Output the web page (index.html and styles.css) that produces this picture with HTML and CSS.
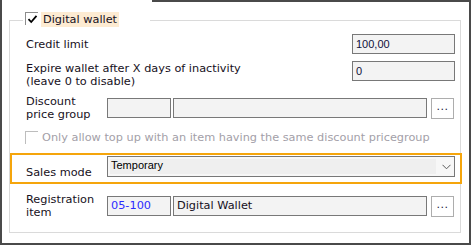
FILE: index.html
```html
<!DOCTYPE html>
<html>
<head>
<meta charset="utf-8">
<link rel="stylesheet" href="styles.css">
</head>
<body>
<div class="window">
  <div class="group">
    <div class="legend">
      <span class="cb cb-on"><svg width="11" height="11" viewBox="0 0 11 11"><path d="M1.5 5.2 L4.2 8 L9.5 1.8" fill="none" stroke="#000" stroke-width="1.8"/></svg></span>
      <span class="legend-label">Digital wallet</span>
    </div>

    <div class="row row-credit">
      <span class="label">Credit limit</span>
      <span class="field field-num">100,00</span>
    </div>

    <div class="row row-expire">
      <span class="label">Expire wallet after X days of inactivity<br>(leave 0 to disable)</span>
      <span class="field field-num">0</span>
    </div>

    <div class="row row-lookup row-discount">
      <span class="label label-col">Discount<br>price group</span>
      <span class="field field-code"></span>
      <span class="field field-name"></span>
      <span class="btn">...</span>
    </div>

    <div class="row row-check">
      <span class="cb cb-off"></span>
      <span class="disabled-text">Only allow top up with an item having the same discount pricegroup</span>
    </div>

    <div class="highlight">
      <span class="label label-col label-sales">Sales mode</span>
      <div class="select">
        <div class="select-value">Temporary</div>
        <svg class="chevron" width="9" height="6" viewBox="0 0 9 6"><path d="M0.5 0.8 L4.5 4.8 L8.5 0.8" fill="none" stroke="#5a5a5a" stroke-width="1"/></svg>
      </div>
    </div>

    <div class="row row-lookup row-reg">
      <span class="label label-col">Registration<br>item</span>
      <span class="field field-code code-blue">05-100</span>
      <span class="field field-name">Digital Wallet</span>
      <span class="btn">...</span>
    </div>
  </div>
</div>
</body>
</html>
```
FILE: styles.css
```css
* { box-sizing: border-box; }

html, body {
  margin: 0;
  padding: 0;
  background: #ffffff;
}

body {
  font-family: "DejaVu Sans", Verdana, sans-serif;
  font-size: 11.3px;
  line-height: 13px;
  color: #161022;
}

.window {
  position: relative;
  width: 471px;
  height: 245px;
  border-left: 2px solid #4a4a4a;
  border-right: 2px solid #4a4a4a;
  border-bottom: 2px solid #4a4a4a;
  background: #fff;
  overflow: hidden;
}

.window::before {
  content: "";
  position: absolute;
  left: 150px;
  right: 0;
  top: 0;
  height: 2px;
  background: #4a4a4a;
}

.group {
  position: relative;
  margin: 20px 0 0 7px;
  width: 452px;
  height: 213px;
  border: 1px solid #dadada;
  padding: 13px 5px 0 16px;
}

.legend {
  position: absolute;
  left: 13px;
  top: -11px;
  width: 127px;
  height: 18px;
  background: #fff;
  display: flex;
  align-items: flex-start;
  padding: 2px 0 0 2px;
}

.cb {
  display: flex;
  align-items: center;
  justify-content: center;
  width: 13px;
  height: 13px;
  flex: none;
}

.cb-on {
  border-left: 1px solid #8c8c8c;
  border-top: 1px solid #8c8c8c;
  padding: 1px 0 0 1px;
}

.cb-off {
  border-left: 1px solid #bdbdbd;
  border-top: 1px solid #bdbdbd;
  margin: 2px 0 0 -1px;
}

.legend-label {
  margin-left: 3px;
  height: 15px;
  line-height: 15px;
  padding: 0 2px 0 2px;
  background: #fdebd2;
  color: #161022;
  white-space: nowrap;
}

.row {
  display: flex;
}

.label {
  white-space: nowrap;
}

.row-credit {
  height: 20px;
  align-items: center;
}

.row-expire {
  margin-top: 7px;
  align-items: flex-start;
}

.row-expire .label {
  padding-top: 1px;
}

.row-credit .field-num,
.row-expire .field-num {
  margin-left: auto;
}

.field {
  display: block;
  height: 20px;
  border: 1px solid #787878;
  background: #f3f3f3;
  color: #10103a;
  line-height: 18px;
  padding-left: 3px;
  white-space: nowrap;
  overflow: hidden;
  flex: none;
}

.field-num {
  width: 103px;
  font-family: "Liberation Sans", Arial, sans-serif;
  font-size: 11px;
}

.row-lookup {
  height: 26px;
  align-items: center;
}

.row-discount {
  margin-top: 7px;
}

.label-col {
  width: 81px;
  flex: none;
}

.field-code {
  width: 64px;
}

.field-name {
  width: 254px;
  margin-left: 2px;
  color: #161022;
}

.code-blue {
  color: #2b2bff;
}

.btn {
  width: 23px;
  height: 21px;
  margin-left: 4px;
  border: 1px solid #adadad;
  background: #fff;
  flex: none;
  text-align: center;
  line-height: 15px;
  font-size: 11px;
  color: #1a1a40;
  letter-spacing: 0.5px;
}

.row-check {
  margin-top: 8px;
  height: 15px;
  align-items: flex-start;
}

.disabled-text {
  margin-left: 4px;
  padding-top: 2px;
  color: #a3a0a8;
  white-space: nowrap;
}

.highlight {
  margin: 9px 0 0 -16px;
  width: 452px;
  height: 31px;
  border: 2px solid #f5a50c;
  display: flex;
  align-items: flex-start;
  padding: 1px 0 0 14px;
}

.label-sales {
  padding-top: 10px;
}

.select {
  display: flex;
  align-items: center;
  width: 348px;
  height: 21px;
  border: 1px solid #787878;
  background: #f7f7f7;
  padding: 2px;
}

.select-value {
  width: 326px;
  height: 15px;
  background: #efefef;
  font-family: "Liberation Sans", Arial, sans-serif;
  font-size: 11px;
  line-height: 13px;
  color: #000;
  padding-left: 1px;
}

.chevron {
  margin-left: 6px;
}

.row-reg {
  margin-top: 9px;
}
```
